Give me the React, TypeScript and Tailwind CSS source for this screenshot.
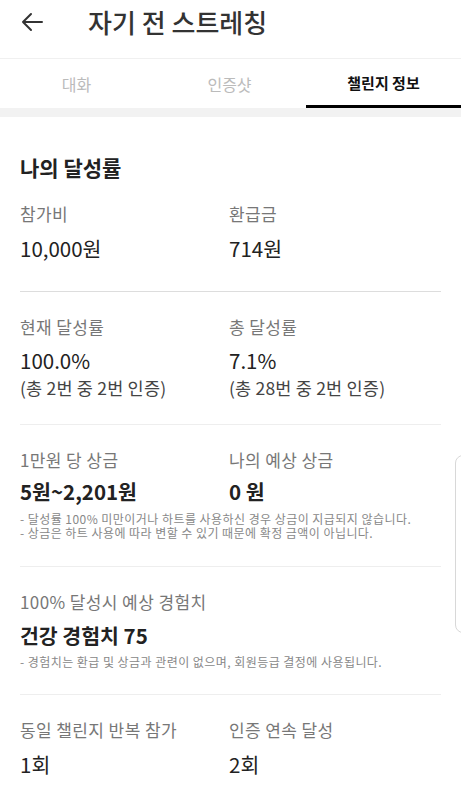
import React from "react";

type Cell = {
  label: string;
  value: string;
  sub?: string;
  bold?: boolean;
};

const FONT = { fontFamily: '"Noto Sans CJK KR", "Noto Sans", sans-serif' };

function Pair({ left, right, gap = "mt-[10px]" }: { left: Cell; right: Cell; gap?: string }) {
  return (
    <div className="grid grid-cols-[209px_1fr]">
      {[left, right].map((c) => (
        <div key={c.label}>
          <div className="text-[17px] leading-[22px] tracking-[0.4px] text-[#777]">{c.label}</div>
          <div
            className={`${gap} text-[20.5px] leading-[26px] text-[#222] ${c.bold ? "font-semibold" : ""}`}
          >
            {c.value}
          </div>
          {c.sub && (
            <div className="mt-[4px] text-[17.5px] leading-[22px] tracking-[0.2px] text-[#444]">{c.sub}</div>
          )}
        </div>
      ))}
    </div>
  );
}

function Notes({ lines, gap }: { lines: string[]; gap: string }) {
  return (
    <div className={`${gap} flex flex-col gap-[1px] text-[12px] leading-[13px] tracking-[0.45px] text-[#888] whitespace-nowrap`}>
      {lines.map((l) => (
        <div key={l}>{l}</div>
      ))}
    </div>
  );
}

export default function App() {
  return (
    <div className="relative h-[793px] w-[461px] overflow-hidden bg-white" style={FONT}>
      <header className="flex h-[58px] items-center pb-[14px]">
        <svg className="ml-[21px]" width="22" height="20" viewBox="0 0 22 20" fill="none">
          <path d="M21 10H2M10 2L2 10l8 8" stroke="#333" strokeWidth="2" strokeLinecap="round" strokeLinejoin="round" />
        </svg>
        <h1 className="ml-[45px] text-[26px] font-medium leading-[32px] text-[#333]">자기 전 스트레칭</h1>
      </header>

      <nav className="flex h-[50px] border-t border-[#f0f0f0]">
        <div className="flex w-[153px] items-center justify-center text-[16px] text-[#bbb]">대화</div>
        <div className="flex w-[153px] items-center justify-center text-[16px] text-[#bbb]">인증샷</div>
        <div className="flex flex-1 items-center justify-center border-b-[3px] border-black pt-[3px] text-[15px] font-bold text-[#111]">
          챌린지 정보
        </div>
      </nav>
      <div className="h-[9px] bg-[#f2f2f2]" />

      <main className="px-[20px]">
        <h2 className="mt-[36px] text-[21px] font-bold leading-[28px] text-[#222]">나의 달성률</h2>

        <div className="mt-[22px] pb-[30px]">
          <Pair left={{ label: "참가비", value: "10,000원" }} right={{ label: "환급금", value: "714원" }} />
        </div>

        <div className="border-t border-[#ddd] pt-[24px] pb-[25px]">
          <Pair
            gap="mt-[9px]"
            left={{ label: "현재 달성률", value: "100.0%", sub: "(총 2번 중 2번 인증)" }}
            right={{ label: "총 달성률", value: "7.1%", sub: "(총 28번 중 2번 인증)" }}
          />
        </div>

        <div className="border-t border-[#eee] pt-[24px] pb-[27px]">
          <Pair
            gap="mt-[7px]"
            left={{ label: "1만원 당 상금", value: "5원~2,201원", bold: true }}
            right={{ label: "나의 예상 상금", value: "0 원", bold: true }}
          />
          <Notes
            gap="mt-[8px]"
            lines={[
              "- 달성률 100% 미만이거나 하트를 사용하신 경우 상금이 지급되지 않습니다.",
              "- 상금은 하트 사용에 따라 변할 수 있기 때문에 확정 금액이 아닙니다.",
            ]}
          />
        </div>

        <div className="border-t border-[#eee] pt-[24px] pb-[26px]">
          <div className="text-[17px] leading-[22px] tracking-[0.4px] text-[#777]">100% 달성시 예상 경험치</div>
          <div className="mt-[9px] text-[20.5px] font-semibold leading-[26px] text-[#222]">건강 경험치 75</div>
          <Notes gap="mt-[7px]" lines={["- 경험치는 환급 및 상금과 관련이 없으며, 회원등급 결정에 사용됩니다."]} />
        </div>

        <div className="border-t border-[#eee] pt-[24px]">
          <Pair
            left={{ label: "동일 챌린지 반복 참가", value: "1회" }}
            right={{ label: "인증 연속 달성", value: "2회" }}
          />
        </div>
      </main>

      <div className="absolute right-[-10px] top-[455px] h-[178px] w-[16px] rounded-[8px] border border-[#d8d8d8] bg-white" />
    </div>
  );
}
